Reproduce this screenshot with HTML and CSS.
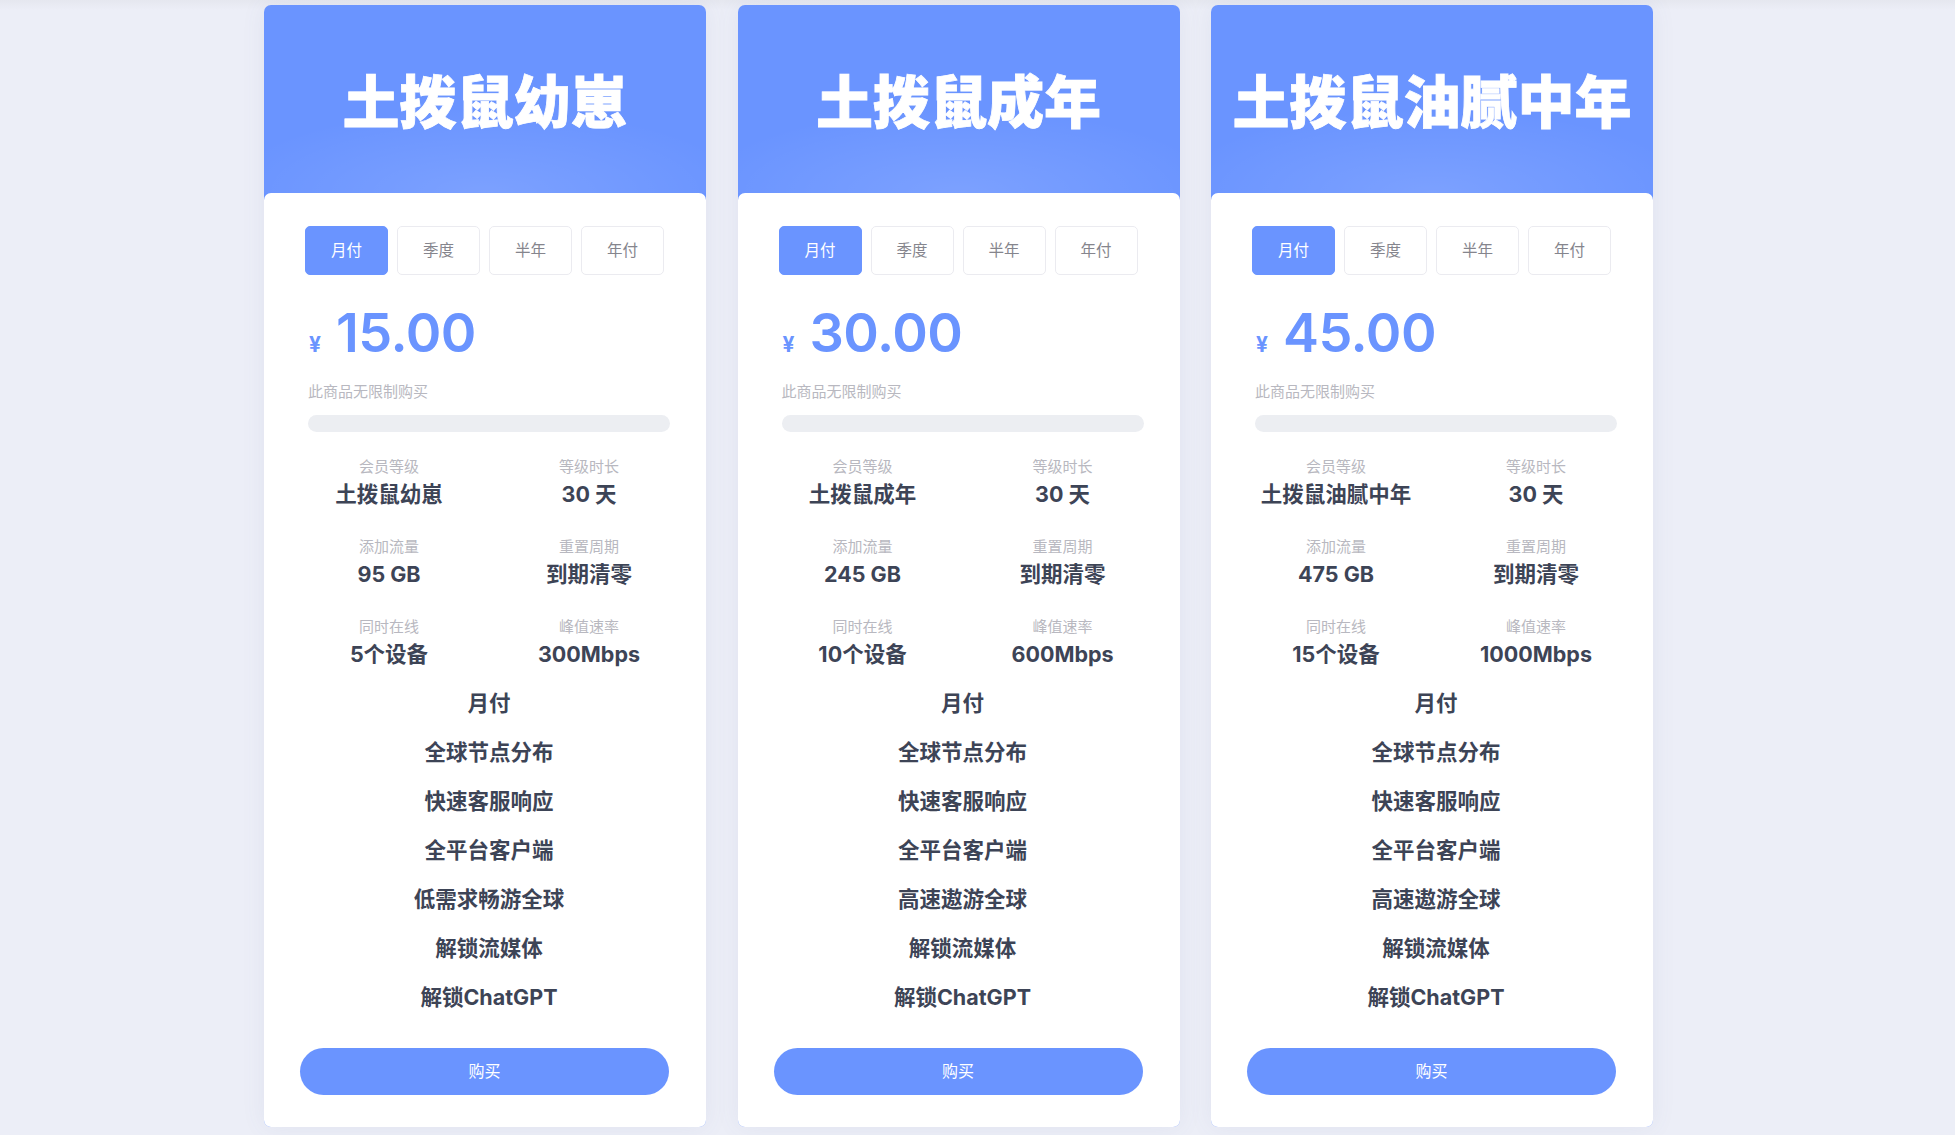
FILE: index.html
```html
<!DOCTYPE html>
<html lang="zh-CN">
<head>
    <meta charset="UTF-8">
    <meta name="viewport" content="width=device-width, initial-scale=1.0">
    <title>套餐购买</title>
    <link rel="stylesheet" href="styles.css">
</head>
<body>
    <div class="plans">
        <div class="plan">
            <div class="plan-head"><h2>土拨鼠幼崽</h2></div>
            <div class="plan-body">
                <div class="tabs">
                    <span class="tab active">月付</span>
                    <span class="tab">季度</span>
                    <span class="tab">半年</span>
                    <span class="tab">年付</span>
                </div>
                <div class="inner">
                    <div class="price"><span class="cur">¥</span><span class="num">15.00</span></div>
                    <div class="note">此商品无限制购买</div>
                    <div class="bar"></div>
                    <div class="stats">
                        <div class="stat"><span class="label">会员等级</span><span class="value">土拨鼠幼崽</span></div>
                        <div class="stat"><span class="label">等级时长</span><span class="value">30 天</span></div>
                        <div class="stat"><span class="label">添加流量</span><span class="value">95 GB</span></div>
                        <div class="stat"><span class="label">重置周期</span><span class="value">到期清零</span></div>
                        <div class="stat"><span class="label">同时在线</span><span class="value">5个设备</span></div>
                        <div class="stat"><span class="label">峰值速率</span><span class="value">300Mbps</span></div>
                    </div>
                    <ul class="features">
                        <li>月付</li>
                        <li>全球节点分布</li>
                        <li>快速客服响应</li>
                        <li>全平台客户端</li>
                        <li>低需求畅游全球</li>
                        <li>解锁流媒体</li>
                        <li>解锁ChatGPT</li>
                    </ul>
                </div>
                <button class="buy">购买</button>
            </div>
        </div>

        <div class="plan">
            <div class="plan-head"><h2>土拨鼠成年</h2></div>
            <div class="plan-body">
                <div class="tabs">
                    <span class="tab active">月付</span>
                    <span class="tab">季度</span>
                    <span class="tab">半年</span>
                    <span class="tab">年付</span>
                </div>
                <div class="inner">
                    <div class="price"><span class="cur">¥</span><span class="num">30.00</span></div>
                    <div class="note">此商品无限制购买</div>
                    <div class="bar"></div>
                    <div class="stats">
                        <div class="stat"><span class="label">会员等级</span><span class="value">土拨鼠成年</span></div>
                        <div class="stat"><span class="label">等级时长</span><span class="value">30 天</span></div>
                        <div class="stat"><span class="label">添加流量</span><span class="value">245 GB</span></div>
                        <div class="stat"><span class="label">重置周期</span><span class="value">到期清零</span></div>
                        <div class="stat"><span class="label">同时在线</span><span class="value">10个设备</span></div>
                        <div class="stat"><span class="label">峰值速率</span><span class="value">600Mbps</span></div>
                    </div>
                    <ul class="features">
                        <li>月付</li>
                        <li>全球节点分布</li>
                        <li>快速客服响应</li>
                        <li>全平台客户端</li>
                        <li>高速遨游全球</li>
                        <li>解锁流媒体</li>
                        <li>解锁ChatGPT</li>
                    </ul>
                </div>
                <button class="buy">购买</button>
            </div>
        </div>

        <div class="plan">
            <div class="plan-head"><h2>土拨鼠油腻中年</h2></div>
            <div class="plan-body">
                <div class="tabs">
                    <span class="tab active">月付</span>
                    <span class="tab">季度</span>
                    <span class="tab">半年</span>
                    <span class="tab">年付</span>
                </div>
                <div class="inner">
                    <div class="price"><span class="cur">¥</span><span class="num">45.00</span></div>
                    <div class="note">此商品无限制购买</div>
                    <div class="bar"></div>
                    <div class="stats">
                        <div class="stat"><span class="label">会员等级</span><span class="value">土拨鼠油腻中年</span></div>
                        <div class="stat"><span class="label">等级时长</span><span class="value">30 天</span></div>
                        <div class="stat"><span class="label">添加流量</span><span class="value">475 GB</span></div>
                        <div class="stat"><span class="label">重置周期</span><span class="value">到期清零</span></div>
                        <div class="stat"><span class="label">同时在线</span><span class="value">15个设备</span></div>
                        <div class="stat"><span class="label">峰值速率</span><span class="value">1000Mbps</span></div>
                    </div>
                    <ul class="features">
                        <li>月付</li>
                        <li>全球节点分布</li>
                        <li>快速客服响应</li>
                        <li>全平台客户端</li>
                        <li>高速遨游全球</li>
                        <li>解锁流媒体</li>
                        <li>解锁ChatGPT</li>
                    </ul>
                </div>
                <button class="buy">购买</button>
            </div>
        </div>
    </div>
</body>
</html>
```

FILE: styles.css
```css
html, body {
    height: 100%;
    overflow: hidden;
}
body {
    margin: 0;
    background: linear-gradient(to bottom, #e5e7ef 0, #eceef7 10px);
    font-family: "Noto Sans CJK SC", sans-serif;
    color: #3d4456;
}
.plans {
    display: grid;
    grid-template-columns: repeat(3, 442px);
    column-gap: 31.5px;
    padding: 5px 0 0 264px;
}
.plan {
    background: #6a94ff;
    border-radius: 7px;
    overflow: hidden;
    box-shadow: 0 0 24px rgba(90, 100, 150, 0.08);
}
.plan-head {
    height: 188px;
    display: flex;
    align-items: center;
    justify-content: center;
    background: radial-gradient(ellipse 60% 45% at 50% 100%, rgba(255, 255, 255, 0.12), rgba(255, 255, 255, 0) 100%);
}
.plan-head h2 {
    margin: 0 0 2px;
    color: #fff;
    font-size: 57px;
    font-weight: 900;
    line-height: 1;
    white-space: nowrap;
    -webkit-text-stroke: 0.8px #fff;
}
.plan-body {
    background: #fff;
    border-radius: 7px 7px 0 0;
    padding: 33px 37px 32px 36px;
}
.tabs {
    display: flex;
    justify-content: center;
    gap: 9px;
}
.tab {
    width: 83px;
    height: 49px;
    box-sizing: border-box;
    padding-bottom: 3px;
    border: 1px solid #ebebf0;
    border-radius: 5px;
    display: flex;
    align-items: center;
    justify-content: center;
    font-size: 15.5px;
    color: #85858d;
}
.tab.active {
    background: #6a94ff;
    border-color: #6a94ff;
    color: #fff;
}
.inner {
    margin: 0 -1px 0 8px;
}
.price {
    margin-top: 31px;
    height: 54px;
    line-height: 54px;
    color: #6a94ff;
    font-family: Inter, "Noto Sans CJK SC", sans-serif;
    font-weight: 700;
    white-space: nowrap;
}
.price .cur {
    font-size: 21px;
    margin: 0 15px 0 1px;
}
.price .num {
    font-size: 54px;
    font-weight: 600;
    letter-spacing: -0.5px;
}
.note {
    margin-top: 21px;
    font-size: 15px;
    line-height: 20px;
    color: #b8b8c0;
}
.bar {
    margin-top: 14px;
    height: 17px;
    border-radius: 9px;
    background: #eceef2;
}
.stats {
    margin-top: 24px;
    display: grid;
    grid-template-columns: 162px 162px;
    column-gap: 38px;
    row-gap: 27px;
}
.stat {
    display: flex;
    flex-direction: column;
    align-items: center;
    gap: 3px;
}
.label {
    font-size: 15px;
    line-height: 20px;
    color: #b8b8c0;
}
.value {
    font-family: Inter, "Noto Sans CJK SC", sans-serif;
    font-size: 21.5px;
    line-height: 30px;
    font-weight: 700;
    color: #3d4456;
    white-space: nowrap;
}
.features {
    list-style: none;
    margin: 10px 0 0;
    padding: 0;
    text-align: center;
}
.features li {
    font-family: Inter, "Noto Sans CJK SC", sans-serif;
    font-size: 21.5px;
    line-height: 49px;
    font-weight: 700;
    color: #3d4456;
}
.buy {
    display: block;
    width: 100%;
    height: 47px;
    margin-top: 26px;
    padding: 0 0 3px;
    border: 0;
    border-radius: 24px;
    background: #6a94ff;
    color: #fff;
    font-family: "Noto Sans CJK SC", sans-serif;
    font-size: 16px;
}
```
